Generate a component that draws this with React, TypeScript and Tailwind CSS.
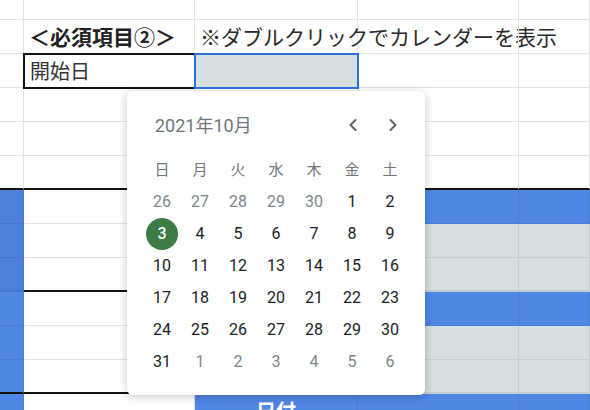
import React from "react";
import { ChevronLeft, ChevronRight } from "lucide-react";

type RowKind = "blank" | "title" | "start" | "band" | "gray" | "foot";

// rows of 34px, first one is cut off at the top of the window
const rows: { kind: RowKind; thick?: boolean; dark?: boolean }[] = [
  { kind: "blank" },
  { kind: "title" },
  { kind: "start" },
  { kind: "blank" },
  { kind: "blank" },
  { kind: "blank", thick: true },
  { kind: "band", dark: true },
  { kind: "gray", dark: true },
  { kind: "gray", dark: true, thick: true },
  { kind: "band" },
  { kind: "gray" },
  { kind: "gray", thick: true },
  { kind: "foot" },
];

const cell = "h-[34px] border-r border-b border-[#e2e2e2] min-w-0";

const blue = "bg-[#5086e4] border-r-[#4a7cd4] border-b-[#4a7cd4]";
const blueDark = "bg-[#4d80dc] border-r-[#4675cc] border-b-[#4675cc]";
const gray = "bg-[#d5dfe0] border-r-[#c4cecf] border-b-[#c4cecf]";

const weekdays = ["日", "月", "火", "水", "木", "金", "土"];

const days: { n: number; muted?: boolean; selected?: boolean }[] = [
  ...[26, 27, 28, 29, 30].map((n) => ({ n, muted: true })),
  ...Array.from({ length: 31 }, (_, i) => ({ n: i + 1, selected: i + 1 === 3 })),
  ...[1, 2, 3, 4, 5, 6].map((n) => ({ n, muted: true })),
];

function Row({ kind, thick, dark }: { kind: RowKind; thick?: boolean; dark?: boolean }) {
  const edge = thick ? "border-b-2 border-b-[#111]" : "";
  if (kind === "title") {
    return (
      <>
        <div className={`${cell}`} />
        <div className={`${cell} flex items-center pl-[5px] font-bold text-[21px] text-[#222] whitespace-nowrap`}>
          ＜必須項目②＞
        </div>
        <div className={`${cell} flex items-center pl-[5px] text-[21px] text-[#2a2a2a] whitespace-nowrap overflow-visible`}>
          ※ダブルクリックでカレンダーを表示
        </div>
        <div className={`${cell} border-r-[#e2e2e2]`} />
        <div className={`${cell}`} />
      </>
    );
  }
  if (kind === "start") {
    return (
      <>
        <div className={`${cell}`} />
        <div className={`${cell} relative z-10 flex items-center pl-[6px] text-[20px] text-[#333] outline-2 outline-[#111] -outline-offset-1`}>
          開始日
        </div>
        <div className={`${cell} ${gray} relative z-10 outline-2 outline-[#2d6fdc] -outline-offset-1`} />
        <div className={`${cell}`} />
        <div className={`${cell}`} />
      </>
    );
  }
  if (kind === "blank") {
    return (
      <>
        {[0, 1, 2, 3, 4].map((i) => (
          <div key={i} className={`${cell} ${edge}`} />
        ))}
      </>
    );
  }
  const fill = kind === "gray" ? gray : blue;
  return (
    <>
      <div className={`${cell} ${dark ? blueDark : blue} ${edge}`} />
      <div className={`${cell} ${edge}`} />
      <div className={`${cell} ${fill} ${edge} flex items-center justify-center`}>
        {kind === "foot" && <span className="text-white font-bold text-[20px]">日付</span>}
      </div>
      <div className={`${cell} ${fill} ${edge}`} />
      <div className={`${cell} ${fill} ${edge}`} />
    </>
  );
}

function DatePicker() {
  return (
    <div className="absolute left-[127px] top-[91px] w-[298px] h-[304px] rounded-[6px] bg-white shadow-[0_2px_10px_rgba(0,0,0,0.22)] pt-[20px] px-4 pb-[17px] font-['Roboto','Noto_Sans_CJK_JP',sans-serif]">
      <div className="flex items-center h-[28px]">
        <span className="pl-[12px] text-[18px] text-[#70757a]">2021年10月</span>
        <div className="ml-auto flex items-center gap-2">
          <button className="w-8 h-8 flex items-center justify-center text-[#5f6368]">
            <ChevronLeft size={20} strokeWidth={2.4} />
          </button>
          <button className="w-8 h-8 flex items-center justify-center text-[#5f6368]">
            <ChevronRight size={20} strokeWidth={2.4} />
          </button>
        </div>
      </div>
      <div className="mt-[15px] grid grid-cols-7">
        {weekdays.map((w) => (
          <div key={w} className="h-8 flex items-center justify-center text-[15px] text-[#70757a]">
            {w}
          </div>
        ))}
        {days.map((d, i) => (
          <div key={i} className="h-8 flex items-center justify-center">
            {d.selected ? (
              <span className="w-8 h-8 rounded-full bg-[#3b7d44] text-white text-[16px] font-medium flex items-center justify-center">
                {d.n}
              </span>
            ) : (
              <span className={`text-[16px] ${d.muted ? "text-[#80868b]" : "text-[#202124]"}`}>{d.n}</span>
            )}
          </div>
        ))}
      </div>
    </div>
  );
}

export default function App() {
  return (
    <div className="relative w-[590px] h-[410px] overflow-hidden bg-white font-['Noto_Sans_CJK_JP',sans-serif]">
      <div className="-mt-[14px] grid grid-cols-[24px_171px_163px_161px_1fr]">
        {rows.map((r, i) => (
          <Row key={i} {...r} />
        ))}
      </div>
      <DatePicker />
    </div>
  );
}
